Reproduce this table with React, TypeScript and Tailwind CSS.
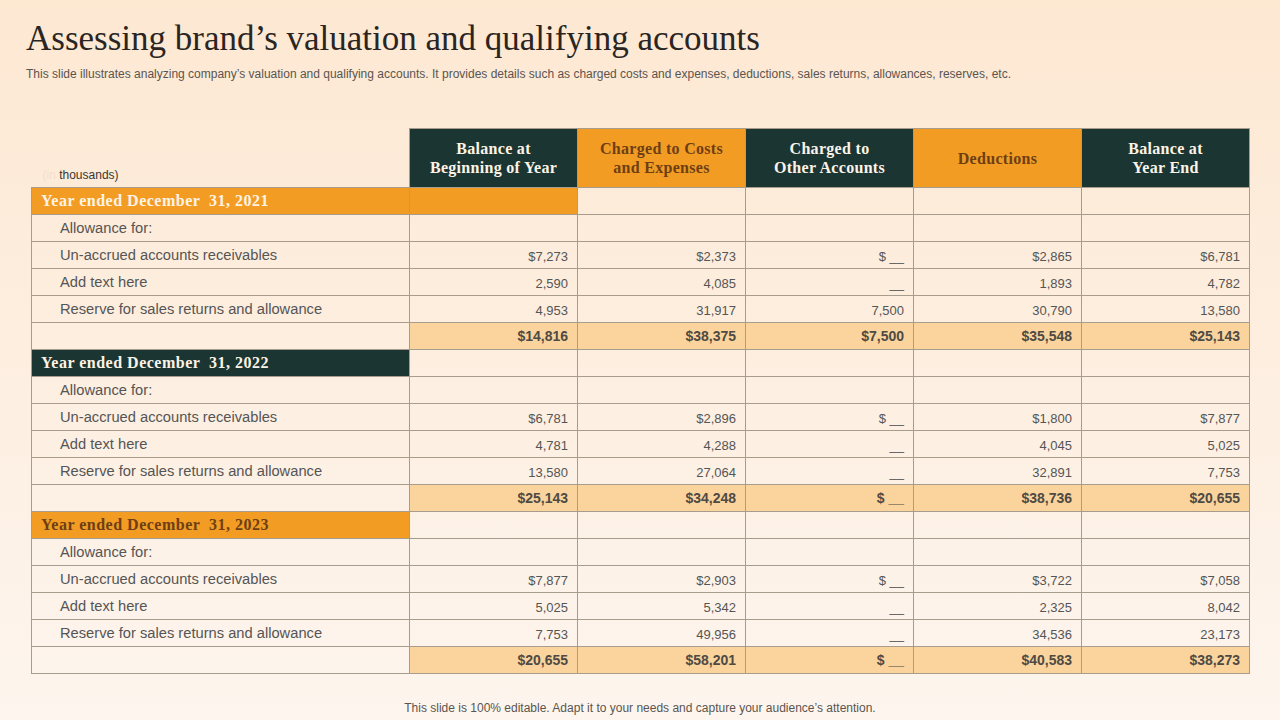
import React from "react";

type Row =
  | { kind: "year"; label: string; variant: "orange" | "dark" | "orange2" }
  | { kind: "label"; label: string }
  | { kind: "data"; label: string; values: string[] }
  | { kind: "total"; values: string[] };

const sections: Row[][] = [
  [
    { kind: "year", label: "Year ended December  31, 2021", variant: "orange" },
    { kind: "label", label: "Allowance for:" },
    { kind: "data", label: "Un-accrued accounts receivables", values: ["$7,273", "$2,373", "$ __", "$2,865", "$6,781"] },
    { kind: "data", label: "Add text here", values: ["2,590", "4,085", "__", "1,893", "4,782"] },
    { kind: "data", label: "Reserve for sales returns and allowance", values: ["4,953", "31,917", "7,500", "30,790", "13,580"] },
    { kind: "total", values: ["$14,816", "$38,375", "$7,500", "$35,548", "$25,143"] },
  ],
  [
    { kind: "year", label: "Year ended December  31, 2022", variant: "dark" },
    { kind: "label", label: "Allowance for:" },
    { kind: "data", label: "Un-accrued accounts receivables", values: ["$6,781", "$2,896", "$ __", "$1,800", "$7,877"] },
    { kind: "data", label: "Add text here", values: ["4,781", "4,288", "__", "4,045", "5,025"] },
    { kind: "data", label: "Reserve for sales returns and allowance", values: ["13,580", "27,064", "__", "32,891", "7,753"] },
    { kind: "total", values: ["$25,143", "$34,248", "$ __", "$38,736", "$20,655"] },
  ],
  [
    { kind: "year", label: "Year ended December  31, 2023", variant: "orange2" },
    { kind: "label", label: "Allowance for:" },
    { kind: "data", label: "Un-accrued accounts receivables", values: ["$7,877", "$2,903", "$ __", "$3,722", "$7,058"] },
    { kind: "data", label: "Add text here", values: ["5,025", "5,342", "__", "2,325", "8,042"] },
    { kind: "data", label: "Reserve for sales returns and allowance", values: ["7,753", "49,956", "__", "34,536", "23,173"] },
    { kind: "total", values: ["$20,655", "$58,201", "$ __", "$40,583", "$38,273"] },
  ],
];

const serif = { fontFamily: '"Liberation Serif", "Times New Roman", serif' };
const sans = { fontFamily: '"Liberation Sans", Arial, sans-serif' };

const border = "border border-[#a89c8c]";

function Header({ text, dark }: { text: string[]; dark: boolean }) {
  return (
    <th
      className={`${border} w-[168px] h-[59px] p-0 text-center font-bold text-[16px] leading-[19px] tracking-[0.3px] ${
        dark ? "bg-[#1b3533] text-[#fbf3e6]" : "bg-[#f39c24] text-[#6e3f14]"
      }`}
      style={serif}
    >
      {text.map((t, i) => (
        <div key={i}>{t}</div>
      ))}
    </th>
  );
}

function renderRow(r: Row, key: string) {
  if (r.kind === "year") {
    const cls =
      r.variant === "dark"
        ? "bg-[#1b3533] text-[#fbf3e6]"
        : r.variant === "orange"
        ? "bg-[#f39c24] text-[#fdf3e6]"
        : "bg-[#f39c24] text-[#6e3f14]";
    return (
      <tr key={key} className="h-[27px]">
        <td className={`${border} ${cls} pl-[9px] font-bold text-[16px] tracking-[0.5px] leading-none whitespace-pre`} style={serif}>
          {r.label}
        </td>
        {[0, 1, 2, 3, 4].map((i) => (
          <td key={i} className={`${border} ${i === 0 && r.variant === "orange" ? "bg-[#f39c24]" : ""}`}></td>
        ))}
      </tr>
    );
  }
  if (r.kind === "label") {
    return (
      <tr key={key} className="h-[27px]">
        <td className={`${border} pl-[28px] text-[14.7px] text-[#555] leading-none`} style={sans}>
          {r.label}
        </td>
        {[0, 1, 2, 3, 4].map((i) => (
          <td key={i} className={border}></td>
        ))}
      </tr>
    );
  }
  if (r.kind === "data") {
    return (
      <tr key={key} className="h-[27px]">
        <td className={`${border} pl-[28px] text-[14.7px] text-[#555] leading-none`} style={sans}>
          {r.label}
        </td>
        {r.values.map((v, i) => (
          <td key={i} className={`${border} pr-[9px] pt-[3px] text-right text-[13px] text-[#555] leading-none`} style={sans}>
            {v}
          </td>
        ))}
      </tr>
    );
  }
  return (
    <tr key={key} className="h-[27px]">
      <td className={border}></td>
      {r.values.map((v, i) => (
        <td
          key={i}
          className={`${border} bg-[#fbd49d] pr-[9px] text-right text-[14px] font-bold text-[#4f4a44] leading-none`}
          style={sans}
        >
          {v}
        </td>
      ))}
    </tr>
  );
}

export default function App() {
  return (
    <div
      className="w-[1280px] h-[720px] overflow-hidden bg-gradient-to-b from-[#fde8d2] to-[#fdf5ee] flex flex-col"
      style={sans}
    >
      <h1 className="pl-[26px] pt-[19px] text-[35px] leading-[40px] text-[#2a2522]" style={serif}>
        Assessing brand’s valuation and qualifying accounts
      </h1>
      <p className="pl-[26px] mt-[8px] text-[12px] leading-[14px] text-[#5a5550]">
        This slide illustrates analyzing company’s valuation and qualifying accounts. It provides details such as charged costs and expenses, deductions, sales returns, allowances, reserves, etc.
      </p>
      <div className="pl-[31px] mt-[47px]">
        <table className="border-collapse table-fixed w-[1218px]">
          <colgroup>
            <col className="w-[378px]" />
            <col className="w-[168px]" />
            <col className="w-[168px]" />
            <col className="w-[168px]" />
            <col className="w-[168px]" />
            <col className="w-[168px]" />
          </colgroup>
          <thead>
            <tr>
              <th className="p-0 align-bottom text-left font-normal">
                <div className="pl-[11px] pb-[3px] text-[12px] text-[#3a3530]">
                  <span className="text-[#f3dfc8]">(in </span>thousands)
                </div>
              </th>
              <Header text={["Balance at", "Beginning of Year"]} dark />
              <Header text={["Charged to Costs", "and Expenses"]} dark={false} />
              <Header text={["Charged to", "Other Accounts"]} dark />
              <Header text={["Deductions"]} dark={false} />
              <Header text={["Balance at", "Year End"]} dark />
            </tr>
          </thead>
          <tbody>{sections.flatMap((s, si) => s.map((r, ri) => renderRow(r, `${si}-${ri}`)))}</tbody>
        </table>
      </div>
      <div className="mt-auto pb-[3px] text-center text-[12px] text-[#5a5550]">
        This slide is 100% editable. Adapt it to your needs and capture your audience’s attention.
      </div>
    </div>
  );
}
